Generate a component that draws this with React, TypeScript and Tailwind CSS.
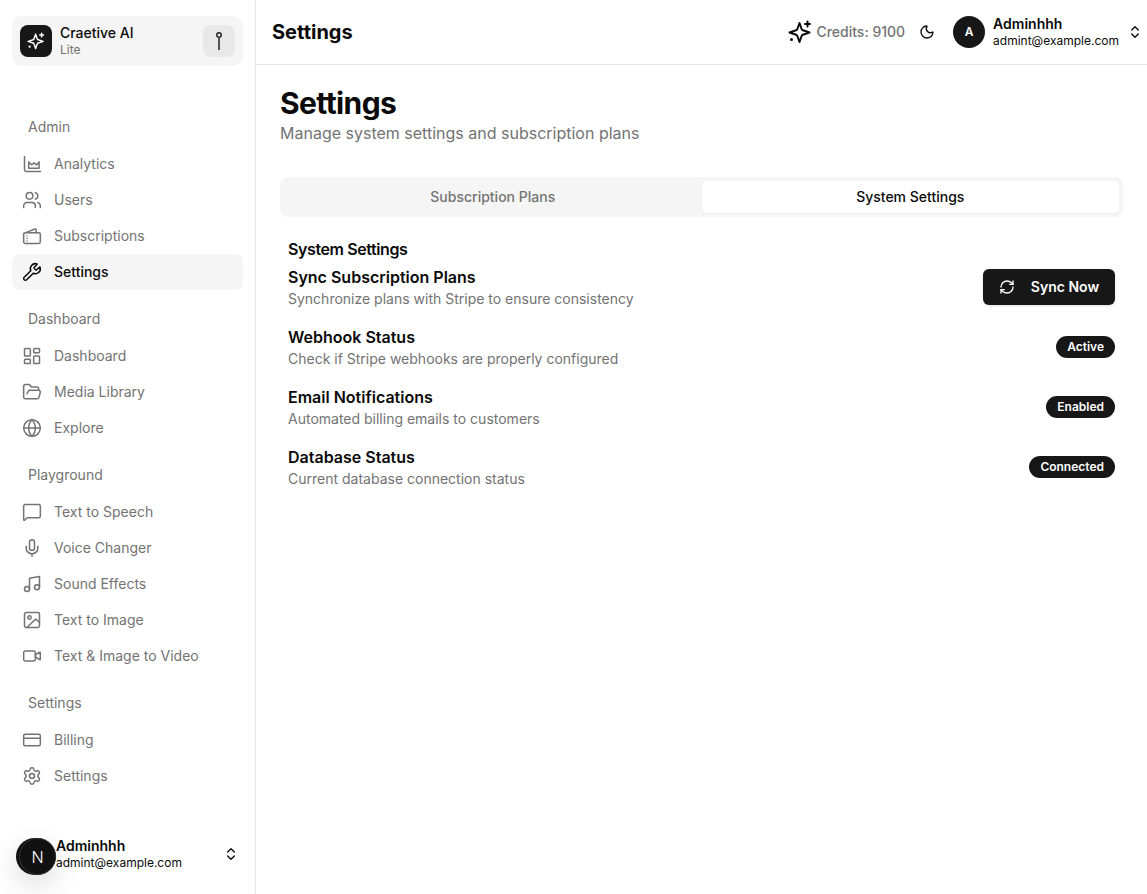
import { Users, Wrench, LayoutDashboard, FolderOpen, Globe, MessageSquare, Mic, Music, Image as ImageIcon, Video, CreditCard, Settings, Moon, ChevronsUpDown, RefreshCw } from "lucide-react";
import type { ComponentType } from "react";

type IconProps = { className?: string; strokeWidth?: number };

function AnalyticsIcon({ className, strokeWidth = 2 }: IconProps) {
  return (
    <svg viewBox="0 0 24 24" fill="none" stroke="currentColor" strokeWidth={strokeWidth} strokeLinecap="round" strokeLinejoin="round" className={className}>
      <path d="M3 3v16a2 2 0 0 0 2 2h17" />
      <path d="M8 17V9.5l3.5 3.5 3-2.5 3 2.5 3-3.5V17z" />
    </svg>
  );
}

function WalletIcon({ className, strokeWidth = 2 }: IconProps) {
  return (
    <svg viewBox="0 0 24 24" fill="none" stroke="currentColor" strokeWidth={strokeWidth} strokeLinecap="round" strokeLinejoin="round" className={className}>
      <rect x="2" y="8" width="20" height="13" rx="2" />
      <path d="M4.5 8 15.5 3.6a1.2 1.2 0 0 1 1.6 1.1V8" />
      <path d="M6 12v.01M6 15v.01M6 18v.01" />
    </svg>
  );
}

function StarIcon({ className, strokeWidth = 2 }: IconProps) {
  return (
    <svg viewBox="0 0 24 24" fill="none" stroke="currentColor" strokeWidth={strokeWidth} strokeLinecap="round" strokeLinejoin="round" className={className}>
      <path d="m11.5 3-2.1 6a2 2 0 0 1-1.3 1.3L1.5 12.5l6.6 2.2a2 2 0 0 1 1.3 1.3l2.1 6 2.1-6a2 2 0 0 1 1.3-1.3l6.6-2.2-6.6-2.2a2 2 0 0 1-1.3-1.3z" />
      <path d="M19.5 1.5v5M22 4h-5" />
      <path d="M3.5 19.5v.01" strokeWidth={3} />
    </svg>
  );
}

type Item = { label: string; icon: ComponentType<IconProps>; active?: boolean };
const groups: { title: string; items: Item[] }[] = [
  { title: "Admin", items: [
    { label: "Analytics", icon: AnalyticsIcon },
    { label: "Users", icon: Users },
    { label: "Subscriptions", icon: WalletIcon },
    { label: "Settings", icon: Wrench, active: true },
  ] },
  { title: "Dashboard", items: [
    { label: "Dashboard", icon: LayoutDashboard },
    { label: "Media Library", icon: FolderOpen },
    { label: "Explore", icon: Globe },
  ] },
  { title: "Playground", items: [
    { label: "Text to Speech", icon: MessageSquare },
    { label: "Voice Changer", icon: Mic },
    { label: "Sound Effects", icon: Music },
    { label: "Text to Image", icon: ImageIcon },
    { label: "Text & Image to Video", icon: Video },
  ] },
  { title: "Settings", items: [
    { label: "Billing", icon: CreditCard },
    { label: "Settings", icon: Settings },
  ] },
];

const rows = [
  { title: "Sync Subscription Plans", desc: "Synchronize plans with Stripe to ensure consistency", button: true },
  { title: "Webhook Status", desc: "Check if Stripe webhooks are properly configured", badge: "Active" },
  { title: "Email Notifications", desc: "Automated billing emails to customers", badge: "Enabled" },
  { title: "Database Status", desc: "Current database connection status", badge: "Connected" },
];

export default function App() {
  return (
    <div className="flex h-[894px] w-full overflow-hidden bg-white text-[#0a0a0a] font-['Inter',sans-serif]">
      <aside className="relative flex w-[256px] shrink-0 flex-col border-r border-[#e5e5e5] px-3 pt-4">
        <div className="flex h-[50px] items-center rounded-[10px] bg-[#f5f5f5] pl-2 pr-2">
          <div className="flex h-8 w-8 items-center justify-center rounded-lg bg-[#171717]">
            <StarIcon className="h-[18px] w-[18px] text-white" />
          </div>
          <div className="ml-2 flex flex-1 flex-col">
            <span className="text-sm leading-[18px] font-medium">Craetive AI</span>
            <span className="text-xs leading-[16px] text-[#737373]">Lite</span>
          </div>
          <div className="flex h-8 w-8 items-center justify-center rounded-lg bg-[#e8e8e8]">
            <svg width="16" height="22" viewBox="0 0 16 22" fill="none" stroke="#262626" strokeWidth="1.5"><circle cx="8" cy="5" r="2.25" /><path d="M8 7.5v12.5" stroke="#525252" strokeWidth="2" /></svg>
          </div>
        </div>
        <nav className="mt-[45px] flex flex-col gap-[13px]">
          {groups.map((g) => (
            <div key={g.title + g.items.length}>
              <div className="mb-[3px] flex h-8 items-center px-4 text-sm text-[#737373]">{g.title}</div>
              {g.items.map((it) => (
                <div key={it.label} className={`flex h-9 items-center gap-3 rounded-lg px-[10px] text-sm ${it.active ? "bg-[#f5f5f5] font-medium text-[#0a0a0a]" : "text-[#737373]"}`}>
                  <it.icon className="h-5 w-5 shrink-0" strokeWidth={1.8} />
                  <span>{it.label}</span>
                </div>
              ))}
            </div>
          ))}
        </nav>
        <div className="mt-auto mb-[23px] flex items-center pl-[44px] pr-1">
          <div className="flex flex-1 flex-col">
            <span className="text-sm leading-[18px] font-semibold">Adminhhh</span>
            <span className="text-xs leading-[16px]">admint@example.com</span>
          </div>
          <ChevronsUpDown className="h-4 w-4" />
        </div>
        <div className="absolute bottom-[19px] left-4 flex h-[37px] w-10 items-center justify-end rounded-full bg-[#111] text-white shadow-[0_10px_28px_rgba(0,0,0,0.14)]">
          <div className="flex h-[37px] w-[37px] items-center justify-center rounded-full border border-[#333] text-base font-light">N</div>
        </div>
      </aside>

      <div className="flex min-w-0 flex-1 flex-col">
        <header className="flex h-[65px] shrink-0 items-center border-b border-[#e5e5e5] pl-4 pr-1">
          <h2 className="flex-1 text-xl font-bold">Settings</h2>
          <StarIcon className="h-6 w-6" />
          <span className="ml-1 text-sm font-medium text-[#737373]">Credits: 9100</span>
          <Moon className="ml-[14px] h-4 w-4" />
          <div className="ml-[18px] flex h-8 w-8 items-center justify-center rounded-full bg-[#171717] text-xs font-semibold text-white">A</div>
          <div className="ml-2 flex flex-col">
            <span className="text-sm leading-[18px] font-semibold">Adminhhh</span>
            <span className="text-xs leading-[16px]">admint@example.com</span>
          </div>
          <ChevronsUpDown className="ml-2 h-4 w-4" />
        </header>
        <main className="px-6 pt-5">
          <h1 className="text-3xl font-bold tracking-[-0.6px]">Settings</h1>
          <p className="text-base text-[#737373]">Manage system settings and subscription plans</p>
          <div className="mt-8 grid h-10 grid-cols-2 rounded-lg bg-[#f5f5f5] p-1">
            <div className="flex items-center justify-center rounded-[5px] text-sm font-medium text-[#737373]">Subscription Plans</div>
            <div className="flex items-center justify-center rounded-[5px] bg-white text-sm font-medium shadow-[0_1px_2px_rgba(0,0,0,0.04)]">System Settings</div>
          </div>
          <section className="mt-5 px-2">
            <h3 className="text-base font-semibold tracking-tight">System Settings</h3>
            <div className="mt-1 flex flex-col gap-4">
              {rows.map((r) => (
                <div key={r.title} className="flex items-center justify-between">
                  <div>
                    <div className="text-base font-semibold">{r.title}</div>
                    <div className="text-sm text-[#737373]">{r.desc}</div>
                  </div>
                  {r.button ? (
                    <div className="flex h-9 w-[132px] items-center justify-center gap-4 rounded-md bg-[#171717] text-sm font-semibold text-white shadow-sm">
                      <RefreshCw className="h-4 w-4" />
                      Sync Now
                    </div>
                  ) : (
                    <div className="flex h-[22px] items-center rounded-full bg-[#171717] px-[11px] text-xs font-semibold text-white">{r.badge}</div>
                  )}
                </div>
              ))}
            </div>
          </section>
        </main>
      </div>
    </div>
  );
}
